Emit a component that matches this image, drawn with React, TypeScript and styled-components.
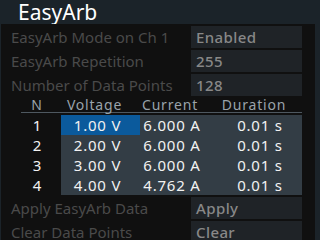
import styled, { createGlobalStyle } from "styled-components";

const GlobalStyle = createGlobalStyle`
  html, body {
    margin: 0;
    padding: 0;
    background: #1b2329;
    font-family: "Noto Sans", "DejaVu Sans", sans-serif;
  }
`;

const settings = [
  { label: "EasyArb Mode on Ch 1", value: "Enabled" },
  { label: "EasyArb Repetition", value: "255" },
  { label: "Number of Data Points", value: "128" },
];

const points = [
  { n: 1, voltage: "1.00 V", current: "6.000 A", duration: "0.01 s" },
  { n: 2, voltage: "2.00 V", current: "6.000 A", duration: "0.01 s" },
  { n: 3, voltage: "3.00 V", current: "6.000 A", duration: "0.01 s" },
  { n: 4, voltage: "4.00 V", current: "4.762 A", duration: "0.01 s" },
];

const actions = [
  { label: "Apply EasyArb Data", value: "Apply" },
  { label: "Clear Data Points", value: "Clear" },
];

export default function App() {
  return (
    <>
      <GlobalStyle />
      <Screen>
        <Header>
          <Title>EasyArb</Title>
        </Header>
        <Panel>
          {settings.map((s) => (
            <SettingRow key={s.label}>
              <Label>{s.label}</Label>
              <ValueBox>{s.value}</ValueBox>
            </SettingRow>
          ))}
          <Table>
            <HeadRow>
              <HeadCell>N</HeadCell>
              <HeadCell>Voltage</HeadCell>
              <HeadCell>Current</HeadCell>
              <HeadCell>Duration</HeadCell>
            </HeadRow>
            {points.map((p, i) => (
              <BodyRow key={p.n}>
                <IndexCell>{p.n}</IndexCell>
                <Cell $selected={i === 0}>{p.voltage}</Cell>
                <Cell>{p.current}</Cell>
                <Cell>{p.duration}</Cell>
              </BodyRow>
            ))}
          </Table>
          <Actions>
            {actions.map((a) => (
              <SettingRow key={a.label}>
                <Label>{a.label}</Label>
                <ValueBox>{a.value}</ValueBox>
              </SettingRow>
            ))}
          </Actions>
        </Panel>
      </Screen>
    </>
  );
}

const Screen = styled.div`
  width: 320px;
  height: 240px;
  display: flex;
  flex-direction: column;
  overflow: hidden;
`;

const Header = styled.div`
  height: 24px;
  display: flex;
  align-items: center;
  padding-left: 18px;
`;

const Title = styled.h1`
  margin: 0;
  font-size: 21px;
  font-weight: 400;
  color: #ffffff;
  line-height: 24px;
`;

const Panel = styled.div`
  flex: 1;
  margin: 0 5px 2px 1px;
  background: #101010;
  padding-top: 2px;
  display: flex;
  flex-direction: column;
  gap: 2px;
`;

const SettingRow = styled.div`
  display: grid;
  grid-template-columns: 180px 111px;
  height: 22px;
  padding-left: 10px;
`;

const Label = styled.div`
  font-size: 15px;
  color: #4a4a4a;
  line-height: 22px;
  white-space: nowrap;
`;

const ValueBox = styled.div`
  background: #1f2327;
  color: #888888;
  font-size: 15px;
  font-weight: 500;
  letter-spacing: 0.4px;
  line-height: 22px;
  padding-left: 5px;
`;

const Table = styled.div`
  margin-left: 20px;
  width: 281px;
  display: flex;
  flex-direction: column;
`;

const columns = "40px 79px 78px 84px";

const HeadRow = styled.div`
  display: grid;
  grid-template-columns: ${columns};
  height: 14px;
  border-bottom: 1px solid #4e5860;
  margin-bottom: 2px;
`;

const HeadCell = styled.div`
  font-size: 14px;
  color: #9aa3ab;
  letter-spacing: 0.8px;
  text-align: center;
  line-height: 13px;
  white-space: nowrap;
  &:nth-child(1) { padding-right: 8px; }
  &:nth-child(2) { padding-right: 12px; }
  &:nth-child(3) { padding-right: 18px; }
  &:nth-child(4) { padding-right: 12px; }
`;

const BodyRow = styled.div`
  display: grid;
  grid-template-columns: ${columns};
  height: 20px;
`;

const IndexCell = styled.div`
  font-size: 15px;
  color: #f2f2f2;
  text-align: center;
  line-height: 20px;
  padding-right: 8px;
  background: #101010;
`;

const Cell = styled.div<{ $selected?: boolean }>`
  font-size: 15px;
  color: #f2f2f2;
  letter-spacing: 0.8px;
  line-height: 20px;
  text-align: center;
  white-space: nowrap;
  background: ${(p) => (p.$selected ? "#0b5a9c" : "#333d45")};
  &:nth-child(2) { padding-right: 6px; }
  &:nth-child(3) { padding-right: 14px; }
`;

const Actions = styled.div`
  display: flex;
  flex-direction: column;
  gap: 2px;
`;
